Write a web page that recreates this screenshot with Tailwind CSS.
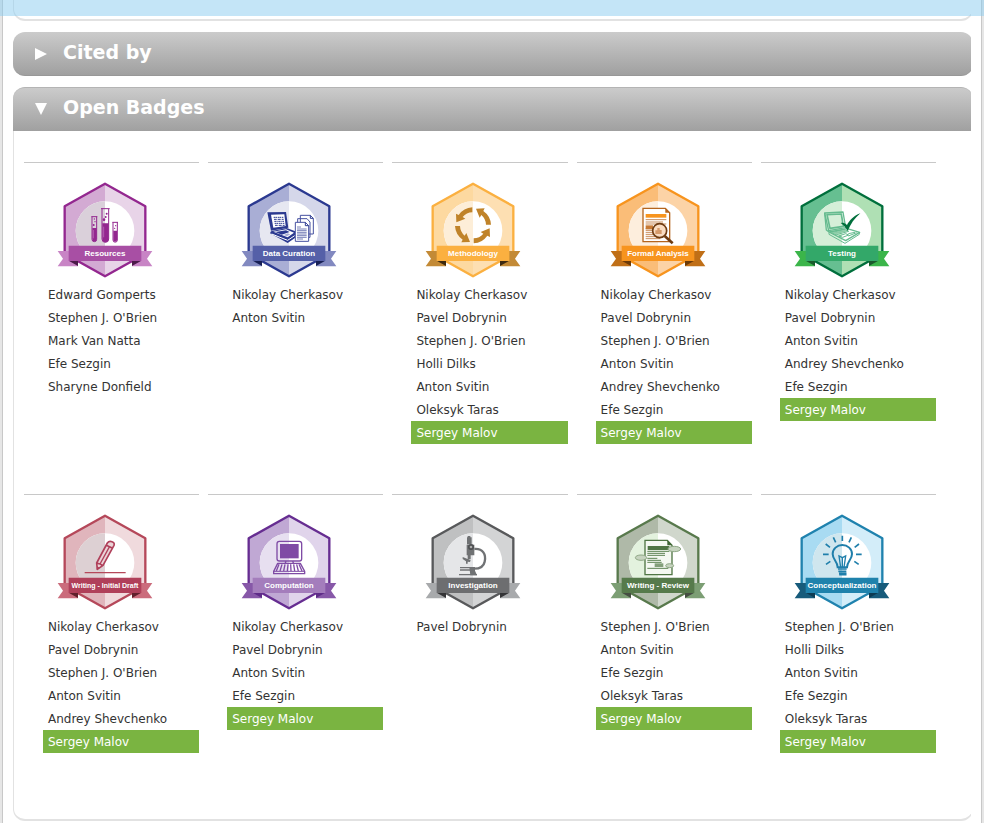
<!DOCTYPE html>
<html lang="en">
<head>
<meta charset="utf-8">
<meta name="viewport" content="width=device-width, initial-scale=1">
<title>Open Badges</title>
<script src="https://cdn.jsdelivr.net/npm/@tailwindcss/browser@4"></script>
</head>
<body class="bg-[#e6e6e6] font-['DejaVu_Sans',sans-serif] text-[12px] text-[#333]">
<div class="fixed inset-x-0 top-0 z-10 h-4 bg-[#89cbf0]/50"></div>
<main class="mx-[2px] min-h-screen border-x border-[#c8c8c8] bg-white px-[10px] pb-[3px]">
  <div class="overflow-hidden">
    <div class="-mr-[2px]">
      <div class="h-[21px] rounded-b-xl border border-t-0 border-b-2 border-[#e2e2e2]"></div>
      <h2 class="mt-[11px]">
        <button type="button" aria-expanded="false" class="flex h-11 w-full items-center gap-[16px] rounded-xl border-b border-[#989898] bg-linear-to-b from-[#cbcbcb] to-[#a0a0a0] pl-[22px] pb-[3px] text-left text-[19px] font-bold text-white">
          <svg class="mt-[3px] size-3" viewBox="0 0 12 12" aria-hidden="true"><path d="M0 0L12 6L0 12Z" fill="#fff"/></svg>
          Cited by
        </button>
      </h2>
      <h2 class="mt-[11px]">
        <button type="button" aria-expanded="true" aria-controls="badges" class="flex h-11 w-full items-center gap-[16px] rounded-t-xl border-t border-[#b4b4b4] bg-linear-to-b from-[#cbcbcb] to-[#a0a0a0] pl-[22px] pb-1 text-left text-[19px] font-bold text-white">
          <svg class="mt-[3px] size-3" viewBox="0 0 12 12" aria-hidden="true"><path d="M0 0H12L6 12Z" fill="#fff"/></svg>
          Open Badges
        </button>
      </h2>
      <section id="badges" class="grid grid-cols-5 gap-x-[9px] gap-y-[50px] rounded-b-xl border border-t-0 border-b-2 border-[#e2e2e2] pt-[31px] pr-[36px] pb-[66px] pl-[10px]"></section>
    </div>
  </div>
</main>
<script>
const N = 'Nikolay Cherkasov', P = 'Pavel Dobrynin', J = "Stephen J. O'Brien", A = 'Anton Svitin',
      Y = 'Andrey Shevchenko', E = 'Efe Sezgin', O = 'Oleksyk Taras', H = 'Holli Dilks', M = 'Sergey Malov';

// colours: outline, left half, right half, circle left, ribbon, ribbon tail, fold
const badges = [
  { label: 'Resources', size: 24, people: ['Edward Gomperts', J, 'Mark Van Natta', E, 'Sharyne Donfield'],
    c: ['#93278f', '#d3aad3', '#e8d4e8', '#dad0da', '#a84fa4', '#c884c5', '#4b1a49'], at: [-51, -36],
    icon: `<g fill="none" stroke="#93278f" stroke-width="3"><path d="M154 140H172M156 140V208A7 7 0 0 0 170 208V140M183 116H209M186 116V207A10 10 0 0 0 206 207V116M217 157H234M219 157V210A6 6 0 0 0 232 210V157"/></g>
      <g fill="#93278f"><path d="M157 174H170V208A6 6 0 0 1 157 208ZM187 160H206V207A9 9 0 0 1 187 207ZM220 182H231V210A5 5 0 0 1 220 210Z"/><circle cx="161" cy="165" r="3"/><circle cx="165" cy="155" r="2"/><circle cx="163" cy="147" r="2"/><circle cx="192" cy="149" r="4"/><circle cx="197" cy="141" r="3"/><circle cx="200" cy="131" r="3"/><circle cx="224" cy="175" r="2"/><circle cx="227" cy="167" r="2"/></g><path d="M191 170V202M160 180V205" stroke="#c37ac0" stroke-width="2"/>` },
  { label: 'Data Curation', size: 24, people: [N, A],
    c: ['#2b3990', '#a9aed5', '#d5d7ea', '#e6e7f1', '#5560a8', '#8289c0', '#171f55'], at: [-48, -36],
    icon: `<path d="M127 127L183 126L190 173L138 182Z" fill="#2b3990"/><path d="M138 134L178 133L182 168L145 173Z" fill="#fff"/><path d="M146 142H175M147 148H176M148 154H177M149 160H178M150 166H179" stroke="#2b3990" stroke-width="3" stroke-dasharray="6 1 3 2"/>
      <path d="M138 184L185 174L211 184V203L188 219L135 190Z" fill="#2b3990"/><path d="M145 185L183 178L207 188L188 202Z" fill="#fff"/><path d="M151 186L183 181L194 186L170 194Z" fill="#2b3990"/><path d="M176 195L188 190L196 193L186 199Z" fill="#a9aed5"/><path d="M140 192L188 211L209 197" fill="none" stroke="#fff" stroke-width="3"/>
      <g fill="#fff" stroke="#4651a0" stroke-width="3"><path d="M226 136H256L265 145V192H226ZM218 146H246L255 156V202H218Z"/><path d="M211 157H241L251 167V214H211Z"/></g><path d="M241 157V167H251M256 136V145H265" fill="none" stroke="#2b3990" stroke-width="3"/><path d="M216 171H228M216 177H245M216 182H245M216 187H245M216 192H245M216 197H245M216 202H245M216 207H234" stroke="#7880b8" stroke-width="3"/>` },
  { label: 'Methodology', size: 24, people: [N, P, J, H, A, O, M],
    c: ['#fbb040', '#fdd9a0', '#fddfb2', '#fdeed8', '#fbb040', '#c38a36', '#3d2a10'], at: [-46, -36],
    icon: `<g fill="#c08329"><path id="arrow" d="M188 112A54 54 0 0 0 147 135L139 131L140 157L167 146L159 141A40 40 0 0 1 188 127Z"/><use href="#arrow" transform="rotate(90 190 166)"/><use href="#arrow" transform="rotate(180 190 166)"/><use href="#arrow" transform="rotate(270 190 166)"/></g>` },
  { label: 'Formal Analysis', size: 24, people: [N, P, J, A, Y, E, M],
    c: ['#f7941e', '#fabd78', '#fcd3a6', '#fdeedd', '#f7941e', '#c06f17', '#6b3a08'], at: [-599, -36],
    icon: `<path d="M698 115H765L778 128V215H698Z" fill="#fff" stroke="#b5651d" stroke-width="4"/><path d="M765 114V128H779Z" fill="#b5651d"/><path d="M706 132H768V143H706Z" fill="#f7941e"/><path d="M706 149H768M706 156H758M706 162H768M706 176H728M706 182H728M706 188H728M706 194H728M706 200H736M706 206H750" stroke="#c98d5b" stroke-width="3"/><path d="M706 166H728V178H706Z" fill="#c77a35"/>
      <circle cx="748" cy="182" r="21" fill="#f9dcc2" stroke="#6f3c12" stroke-width="5"/><path d="M735 188V181H741V174H748V180H754V192H735Z" fill="#d69a6a"/><path d="M763 198L787 220" stroke="#6f3c12" stroke-width="8"/>` },
  { label: 'Testing', size: 24, people: [N, P, A, Y, E, M],
    c: ['#006f3c', '#66bf91', '#afe0b4', '#d5efd8', '#33a869', '#3bb54a', '#1a5a2c'], at: [-42, -36],
    icon: `<g fill="none" stroke="#65bb8f" stroke-width="3" stroke-linejoin="round"><path d="M134 129L189 126L197 173L146 182Z" stroke-width="4"/><path d="M141 134L184 132L190 169L150 175Z" stroke-width="5"/><path d="M134 129L139 180L148 187M147 186L202 176L239 187L197 212Z" stroke-width="4"/><path d="M147 187V193L195 220L238 193V187M154 188L193 179L206 184L169 194Z"/><path d="M176 198L197 191L206 195L188 202ZM205 191L225 187M205 198L230 188"/></g><path d="M152 188L193 180L204 184L169 192Z" fill="#8bcca7"/><path d="M182 159C190 156 197 160 201 165C208 152 220 138 241 130C223 145 212 162 203 183C198 174 192 166 182 159Z" fill="#006f3c"/>` },
  { label: 'Writing - Initial Draft', size: 21, people: [N, P, J, A, Y, M],
    c: ['#b5485a', '#e0b5bc', '#f0dadd', '#ddd0d3', '#b0405a', '#cb6c7c', '#61202c'], at: [-51, -27],
    icon: `<path d="M134 203H257" stroke="#b5485a" stroke-width="4"/><path d="M170 174L202 114Q207 107 216 110Q225 113 222 121L189 181L172 193ZM199 121L218 130M171 175Q180 174 188 182" fill="#ead3d7" stroke="#b0405a" stroke-width="5" stroke-linejoin="round"/><path d="M180 177L209 124" stroke="#b0405a" stroke-width="4"/><path d="M171 184L179 188L170 194Z" fill="#b0405a"/>` },
  { label: 'Computation', size: 24, people: [N, P, A, E, M],
    c: ['#662d91', '#c0a8d4', '#e0d4eb', '#e7dff0', '#a47dbc', '#8758a8', '#5f2c88'], at: [-48, -27],
    icon: `<g fill="none" stroke="#7f4ba5" stroke-width="4"><rect x="156" y="109" width="74" height="59" rx="7"/><path d="M183 168L181 174M203 168L205 174M158 175H226L239 199V206H146V199Z" stroke-linejoin="round"/></g><path d="M165 117H221V160H165Z" fill="#7f4ba5"/><path d="M162 178L154 198M171 178L165 198M180 178L176 198M189 178L187 198M197 178L198 198M206 178L209 198M215 178L220 198M222 178L231 198" stroke="#7f4ba5" stroke-width="4"/><path d="M146 199H239" stroke="#7f4ba5" stroke-width="3"/>` },
  { label: 'Investigation', size: 24, people: [P],
    c: ['#58595b', '#bfc0c1', '#d3d4d5', '#e5e6e8', '#6d6e70', '#a8aaac', '#343436'], at: [-46, -27],
    icon: `<g fill="#707274"><path d="M174 93H182V97H186V118H172V97H174ZM171 119H194V151H171ZM174 151H183V163H174ZM159 156L183 166L181 171L174 170V176H169V169L159 162Z"/></g>
      <path d="M194 132C220 130 230 148 225 170C222 185 210 192 190 191" fill="none" stroke="#707274" stroke-width="7"/><path d="M151 188H196V204H151Z" fill="#e9eaeb"/><path d="M151 188H196M151 195H196M148 209H202" stroke="#707274" stroke-width="4"/><path d="M179 187H196V197L202 211H182Z" fill="#707274"/><circle cx="184" cy="126" r="9" fill="#4e5052"/><circle cx="184" cy="126" r="4" fill="#aaa"/>` },
  { label: 'Writing - Review', size: 24, people: [J, A, E, O, M],
    c: ['#58794c', '#afb9a8', '#d0d7cc', '#e3f2de', '#567a4b', '#7c9e74', '#454e42'], at: [-44, -27],
    icon: `<path d="M149 106H216L230 121V209H149Z" fill="#f4f8f1" stroke="#4f7544" stroke-width="4"/><path d="M216 105V121H231Z" fill="#3f6535"/><path d="M157 123H222V135H157Z" fill="#4f7544"/><path d="M156 139H222M156 145H209M156 151H209M156 160H186M156 166H197M156 172H199M156 190H219" stroke="#5d8252" stroke-width="3"/><path d="M178 175H204V186H178Z" fill="#839f7a"/><g fill="#c6d3bf" stroke="#8fa886" stroke-width="3"><ellipse cx="237" cy="132" rx="19" ry="8"/><ellipse cx="137" cy="158" rx="17" ry="8"/><ellipse cx="223" cy="182" rx="12" ry="6"/></g>` },
  { label: 'Conceptualization', size: 24, people: [J, H, A, E, O, M],
    c: ['#1f82ae', '#a8dbf2', '#d3edf9', '#cfe6ee', '#1f82ac', '#175b7b', '#0d3b52'], at: [-42, -27],
    icon: `<g fill="none" stroke="#1f7fab" stroke-width="5"><path d="M173 187C173 169 158 164 158 147A29 27 0 0 1 216 147C216 164 201 169 201 187Z" stroke-width="6"/><path d="M174 192H200M175 199H199M177 205H197V209H180V205" stroke-width="5"/><path d="M182 187L177 153L187 158L197 153L192 187M187 160V187" stroke-width="4"/><path d="M187 92V108M160 97L167 112M214 97L207 112M137 117L150 127M237 117L224 127M129 148H146M228 148H245M138 178L151 169M236 178L223 169"/></g>` }
];

const badgeSvg = ({ label, size, c, icon, at }) => `
<svg class="ml-[33px] size-24" viewBox="0 0 288 288" role="img" aria-label="${label}">
  <path d="M144 5L265 73V215L144 283Z" fill="${c[2]}"/><path d="M144 5L23 73V215L144 283Z" fill="${c[1]}"/>
  <circle cx="144" cy="146" r="88" fill="#fff"/><path d="M144 58A88 88 0 0 0 144 234Z" fill="${c[3]}"/>
  <path d="M144 5L265 73V215L144 283L23 215V73Z" fill="none" stroke="${c[0]}" stroke-width="7" stroke-linejoin="round"/>
  <g transform="translate(${at[0]} ${at[1]})">${icon}</g>
  <path d="M2 207H63V253H2L18 230ZM286 207H225V253H286L270 230Z" fill="${c[5]}"/>
  <path d="M35 236H63V252ZM253 236H225V252Z" fill="${c[6]}"/>
  <path d="M35 191H253V237H35Z" fill="${c[4]}"/>
  <text x="144" y="223" text-anchor="middle" font-family="Liberation Sans, sans-serif" font-weight="700" font-size="${size}" fill="#fff">${label}</text>
</svg>`;

document.getElementById('badges').innerHTML = badges.map(b => `
<article class="border-t border-[#c8c8c8] pt-[19px]">
  ${badgeSvg(b)}
  <ul class="mt-[5px] ml-[19px]">
    ${b.people.map(p => `<li class="h-[23px] px-[5px] leading-[24px] ${p === M ? 'bg-[#7ab441] text-white' : ''}"><a href="#">${p}</a></li>`).join('')}
  </ul>
</article>`).join('');
</script>
</body>
</html>
